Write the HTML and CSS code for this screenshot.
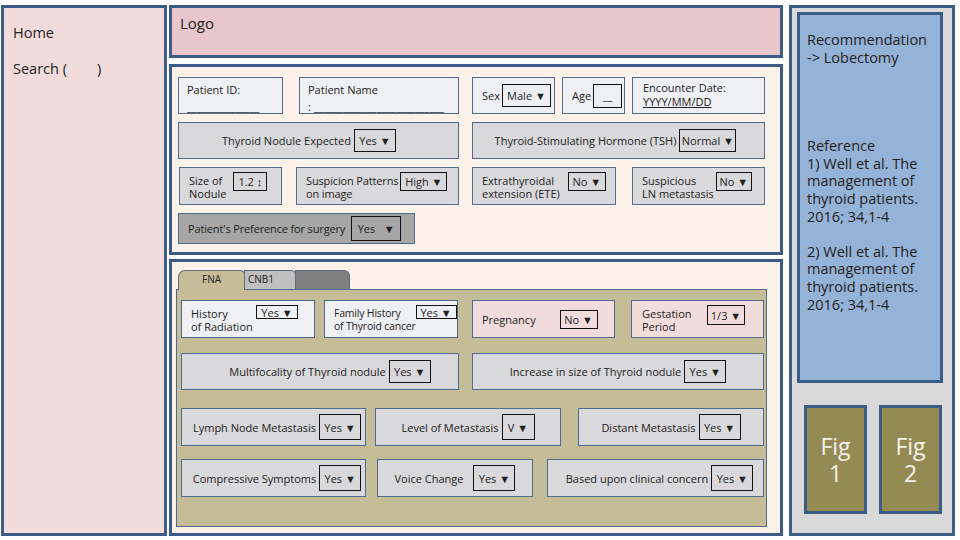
FILE: index.html
```html
<!DOCTYPE html>
<html>
	<head>
		<meta charset="UTF-8">
		<title>Thyroid</title>
		<link rel="stylesheet" href="styles.css">
	</head>
	<body>
		<div class="app">
			<div class="side">
				<p class="side-link">Home</p>
				<p class="side-link">Search (&nbsp;&nbsp;&nbsp;&nbsp;&nbsp;&nbsp;&nbsp;&nbsp;)</p>
			</div>

			<div class="main">
				<div class="logo-bar">Logo</div>

				<div class="panel patient">
					<div class="row r1">
						<div class="box light two pid">
							<span>Patient ID:</span>
							<span>_______________</span>
						</div>
						<div class="box light two pname">
							<span>Patient Name</span>
							<span>: ___________________________</span>
						</div>
						<div class="box light inline sex">
							<span>Sex</span>
							<span class="sel sel-sex">Male ▼</span>
						</div>
						<div class="box light inline age">
							<span>Age</span>
							<span class="sel sel-age">__</span>
						</div>
						<div class="box light two date">
							<span>Encounter Date:</span>
							<span class="ul">YYYY/MM/DD</span>
						</div>
					</div>

					<div class="row r2">
						<div class="box grey center tne">
							<span>Thyroid Nodule Expected</span>
							<span class="sel sel-mid">Yes ▼</span>
						</div>
						<div class="box grey center tsh">
							<span>Thyroid-Stimulating Hormone (TSH)</span>
							<span class="sel sel-mid">Normal ▼</span>
						</div>
					</div>

					<div class="row r3">
						<div class="box grey top size">
							<span class="lbl"><span>Size of</span><span>Nodule</span></span>
							<span class="sel sel-sm">1.2 ↕</span>
						</div>
						<div class="box grey top susp">
							<span class="lbl"><span>Suspicion Patterns</span><span>on image</span></span>
							<span class="sel sel-sm">High ▼</span>
						</div>
						<div class="box grey top ete">
							<span class="lbl"><span>Extrathyroidal</span><span>extension (ETE)</span></span>
							<span class="sel sel-sm">No ▼</span>
						</div>
						<div class="box grey top lnm">
							<span class="lbl"><span>Suspicious</span><span>LN metastasis</span></span>
							<span class="sel sel-sm">No ▼</span>
						</div>
					</div>

					<div class="row r4">
						<div class="box dark inline pref">
							<span class="pref-text">Patient's Preference for surgery</span>
							<span class="sel sel-pref">Yes &nbsp;&nbsp;▼</span>
						</div>
					</div>
				</div>

				<div class="panel history">
					<div class="tabs">
						<span class="tab tab-on">FNA</span>
						<span class="tab tab-b">CNB1</span>
						<span class="tab tab-c"></span>
					</div>
					<div class="tab-body">
						<div class="row ra">
							<div class="box light top rad">
								<span class="lbl"><span>History</span><span>of Radiation</span></span>
								<span class="sel sel-xs">Yes ▼</span>
							</div>
							<div class="box light top fam">
								<span class="lbl"><span>Family History</span><span>of Thyroid cancer</span></span>
								<span class="sel sel-xs">Yes ▼</span>
							</div>
							<div class="box pink inline preg">
								<span>Pregnancy</span>
								<span class="sel sel-preg">No ▼</span>
							</div>
							<div class="box pink top gest">
								<span class="lbl"><span>Gestation</span><span>Period</span></span>
								<span class="sel sel-gest">1/3 ▼</span>
							</div>
						</div>

						<div class="row rb">
							<div class="box grey center multi">
								<span>Multifocality of Thyroid nodule</span>
								<span class="sel sel-mid">Yes ▼</span>
							</div>
							<div class="box grey center incr">
								<span>Increase in size of Thyroid nodule</span>
								<span class="sel sel-mid">Yes ▼</span>
							</div>
						</div>

						<div class="row rc">
							<div class="box grey center c1">
								<span>Lymph Node Metastasis</span>
								<span class="sel sel-tall">Yes ▼</span>
							</div>
							<div class="box grey center c2">
								<span>Level of Metastasis</span>
								<span class="sel sel-tall">V ▼</span>
							</div>
							<div class="box grey center c3">
								<span>Distant Metastasis</span>
								<span class="sel sel-tall">Yes ▼</span>
							</div>
						</div>

						<div class="row rd">
							<div class="box grey center d1">
								<span>Compressive Symptoms</span>
								<span class="sel sel-tall">Yes ▼</span>
							</div>
							<div class="box grey center d2">
								<span>Voice Change</span>
								<span class="sel sel-tall sel-gap">Yes ▼</span>
							</div>
							<div class="box grey center d3">
								<span>Based upon clinical concern</span>
								<span class="sel sel-tall">Yes ▼</span>
							</div>
						</div>
					</div>
				</div>
			</div>

			<div class="aside">
				<div class="rec">
					<p>Recommendation<br>-&gt; Lobectomy</p>
					<p class="ref">Reference<br>1) Well et al. The management of thyroid patients. 2016; 34,1-4</p>
					<p class="ref2">2) Well et al. The management of thyroid patients. 2016; 34,1-4</p>
				</div>
				<div class="figs">
					<div class="fig"><span>Fig</span><span>1</span></div>
					<div class="fig"><span>Fig</span><span>2</span></div>
				</div>
			</div>
		</div>
	</body>
</html>
```

FILE: styles.css
```css
html,body,div,p,span {
	margin: 0;
	padding: 0;
}
body {
	background-color: #fff;
	font-family: "Open Sans", "Noto Sans", sans-serif;
	color: #222;
}

.app {
	display: flex;
	width: 960px;
	height: 540px;
	padding: 5px 0 4px 1px;
	box-sizing: border-box;
}

/* left menu */
.side {
	width: 166px;
	border: 3px solid #3b5c87;
	background-color: #f2dcdb;
	box-sizing: border-box;
	padding: 16px 0 0 9px;
}
.side-link {
	font-size: 14.5px;
	line-height: 18px;
	margin-bottom: 18px;
}

/* middle column */
.main {
	width: 614px;
	margin-left: 2px;
	display: flex;
	flex-direction: column;
}
.logo-bar {
	height: 53px;
	border: 3px solid #3b5c87;
	background-color: #e8c6ca;
	box-sizing: border-box;
	padding: 5px 0 0 8px;
	font-size: 15px;
	line-height: 20px;
	margin-bottom: 6px;
}
.panel {
	border: 3px solid #3b5c87;
	background-color: #fdf2ea;
	box-sizing: border-box;
}
.patient {
	height: 191px;
	padding: 10px 0 0 6px;
	margin-bottom: 4px;
}
.history {
	flex: 1;
	display: flex;
	flex-direction: column;
	padding: 8px 12px 6px 5px;
}

.row {
	display: flex;
}
.box {
	border: 1px solid #4f6b8e;
	box-sizing: border-box;
	font-size: 11px;
	line-height: 13px;
	display: flex;
	white-space: nowrap;
}
.light { background-color: #eff0f3; }
.grey { background-color: #d9d9db; }
.dark { background-color: #a6a6a6; }
.pink { background-color: #f2dcdb; }

.two {
	flex-direction: column;
	padding: 3px 8px 0 8px;
}
.two span { line-height: 17px; }
.inline {
	align-items: center;
	padding-left: 9px;
}
.center {
	align-items: center;
	justify-content: center;
}
.top {
	align-items: flex-start;
	padding: 4px 0 0 9px;
}
.lbl {
	display: flex;
	flex-direction: column;
	flex-shrink: 0;
	padding-top: 2px;
}
.lbl span {
	display: block;
	height: 13px;
	line-height: 13px;
}

.sel {
	border: 1px solid #111;
	box-sizing: border-box;
	display: flex;
	align-items: center;
	justify-content: center;
	white-space: nowrap;
	flex-shrink: 0;
	font-size: 11px;
}
.ul {
	text-decoration: underline;
	line-height: 14px !important;
}

/* patient rows */
.r1 { height: 37px; }
.pid { width: 105px; margin-right: 16px; }
.pname { width: 160px; margin-right: 13px; }
.sex { width: 83px; margin-right: 7px; }
.age { width: 63px; margin-right: 7px; }
.date { width: 133px; padding-left: 10px; }
.date span { line-height: 14px; }
.sel-sex { width: 49px; height: 23px; margin-left: 2px; }
.sel-age { width: 29px; height: 24px; margin-left: 2px; }

.r2 { height: 37px; margin-top: 8px; }
.tne { width: 281px; margin-right: 13px; padding-right: 19px; }
.tsh { width: 293px; padding-right: 6px; }
.sel-mid { width: 42px; height: 23px; margin-left: 3px; }
.tsh .sel-mid { width: 57px; }

.r3 { height: 38px; margin-top: 8px; }
.size { width: 103px; margin: 0 14px 0 1px; }
.susp { width: 163px; margin-right: 13px; }
.susp .lbl { letter-spacing: -0.15px; }
.ete { width: 144px; margin-right: 16px; }
.lnm { width: 133px; }
.sel-sm { height: 19px; padding: 0 3px; margin-left: 6px; }
.size .sel-sm { margin-left: 7px; width: 34px; }
.susp .sel-sm { margin-left: 2px; width: 47px; }
.ete .sel-sm { margin-left: 8px; width: 38px; }
.lnm .sel-sm { margin-left: 2px; width: 36px; }

.r4 { height: 31px; margin-top: 8px; }
.pref { width: 237px; }
.pref-text { letter-spacing: -0.15px; }
.sel-pref { width: 50px; height: 25px; margin-left: 6px; }

/* tabs */
.tabs {
	display: flex;
	height: 19px;
	padding-left: 1px;
}
.tab {
	height: 19px;
	box-sizing: border-box;
	border: 1px solid #5a6a7a;
	border-bottom: none;
	border-radius: 7px 5px 0 0;
	font-size: 10px;
	line-height: 14px;
	padding-top: 1px;
}
.tab-on {
	width: 67px;
	background-color: #c4bd97;
	text-align: center;
	position: relative;
	z-index: 1;
	height: 20px;
}
.tab-b {
	width: 52px;
	background-color: #bfbfbf;
	padding-left: 3px;
	margin-left: -1px;
	border-radius: 0 5px 0 0;
}
.tab-c {
	width: 55px;
	background-color: #7f7f7f;
	margin-left: -1px;
	border-radius: 0 6px 0 0;
}
.tab-body {
	flex: 1;
	border: 1px solid #4f6b8e;
	background-color: #c4bd97;
	padding: 10px 0 0 4px;
	margin-left: -1px;
	width: 591px;
	box-sizing: border-box;
}

.ra { height: 38px; }
.rad { width: 134px; margin-right: 9px; }
.fam { width: 134px; margin-right: 14px; }
.fam .lbl { font-size: 10.5px; letter-spacing: -0.2px; }
.preg { width: 143px; margin-right: 16px; }
.gest { width: 133px; padding-left: 10px; }
.sel-xs { width: 42px; height: 14px; margin-left: auto; margin-right: 16px; }
.fam .sel-xs { margin-right: 5px; width: 41px; }
.sel-preg { width: 38px; height: 19px; margin-left: 24px; }
.sel-gest { width: 38px; height: 20px; margin-left: auto; margin-right: 18px; }

.rb { height: 37px; margin-top: 15px; }
.multi { width: 278px; margin-right: 13px; padding-left: 20px; }
.incr { width: 292px; }

.rc { height: 38px; margin-top: 18px; }
.c1 { width: 185px; margin-right: 9px; padding-left: 7px; }
.c2 { width: 186px; margin-right: 17px; }
.c3 { width: 186px; }
.sel-tall { width: 42px; height: 26px; margin-left: 3px; }
.c2 .sel-tall { width: 33px; }

.rd { height: 38px; margin-top: 13px; }
.d1 { width: 185px; margin-right: 11px; padding-left: 7px; }
.d2 { width: 156px; margin-right: 14px; }
.d3 { width: 217px; padding-left: 8px; }
.sel-gap { margin-left: 10px; }

/* right column */
.aside {
	width: 166px;
	margin-left: 6px;
	border: 3px solid #3b5c87;
	background-color: #d9d9d9;
	box-sizing: border-box;
	padding: 4px 0 0 5px;
}
.rec {
	width: 146px;
	height: 371px;
	border: 3px solid #3b5c87;
	background-color: #95b3d7;
	box-sizing: border-box;
	padding: 16px 4px 0 7px;
	font-size: 14.5px;
	line-height: 17.6px;
	color: #1e1e1e;
}
.ref {
	margin-top: 71px;
}
.ref2 {
	margin-top: 17.6px;
}
.figs {
	display: flex;
	gap: 12px;
	margin: 22px 0 0 7px;
}
.fig {
	width: 63px;
	height: 109px;
	border: 3px solid #3b5c87;
	background-color: #948a54;
	box-sizing: border-box;
	display: flex;
	flex-direction: column;
	align-items: center;
	justify-content: center;
	color: #f4f2ea;
	font-size: 23px;
}
.fig span {
	display: block;
	height: 27px;
	line-height: 27px;
}
```
